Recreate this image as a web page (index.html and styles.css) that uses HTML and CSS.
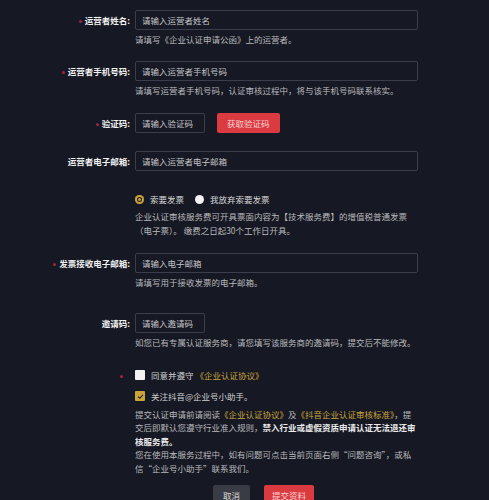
FILE: index.html
```html
<!DOCTYPE html>
<html lang="zh-CN">
<head>
    <meta charset="UTF-8">
    <meta name="viewport" content="width=device-width, initial-scale=1.0">
    <title>企业认证</title>
    <link rel="stylesheet" href="styles.css">
</head>
<body>
    <form class="apply-form">
        <div class="field field-name">
            <label class="label required">运营者姓名:</label>
            <div class="control">
                <input class="input" type="text" placeholder="请输入运营者姓名">
                <p class="hint">请填写《企业认证申请公函》上的运营者。</p>
            </div>
        </div>

        <div class="field field-phone">
            <label class="label required">运营者手机号码:</label>
            <div class="control">
                <input class="input" type="text" placeholder="请输入运营者手机号码">
                <p class="hint">请填写运营者手机号码，认证审核过程中，将与该手机号码联系核实。</p>
            </div>
        </div>

        <div class="field field-code">
            <label class="label required">验证码:</label>
            <div class="control code-row">
                <input class="input input-short" type="text" placeholder="请输入验证码">
                <button type="button" class="btn btn-red">获取验证码</button>
            </div>
        </div>

        <div class="field field-mail">
            <label class="label">运营者电子邮箱:</label>
            <div class="control">
                <input class="input" type="text" placeholder="请输入运营者电子邮箱">
            </div>
        </div>

        <div class="field field-invoice">
            <span class="label"></span>
            <div class="control">
                <div class="radios">
                    <span class="radio checked"></span><span>索要发票</span>
                    <span class="radio"></span><span>我放弃索要发票</span>
                </div>
                <p class="desc">企业认证审核服务费可开具票面内容为【技术服务费】的增值税普通发票（电子票）。 缴费之日起30个工作日开具。</p>
            </div>
        </div>

        <div class="field field-invoice-mail">
            <label class="label required">发票接收电子邮箱:</label>
            <div class="control">
                <input class="input" type="text" placeholder="请输入电子邮箱">
                <p class="hint">请填写用于接收发票的电子邮箱。</p>
            </div>
        </div>

        <div class="field field-invite">
            <label class="label">邀请码:</label>
            <div class="control">
                <input class="input input-short" type="text" placeholder="请输入邀请码">
                <p class="hint">如您已有专属认证服务商，请您填写该服务商的邀请码，提交后不能修改。</p>
            </div>
        </div>

        <div class="field field-agree">
            <span class="label dot"></span>
            <div class="control check-row">
                <span class="checkbox"></span>
                <span>同意并遵守 <a class="gold">《企业认证协议》</a></span>
            </div>
        </div>

        <div class="field field-follow">
            <span class="label"></span>
            <div class="control">
                <div class="check-row">
                    <span class="checkbox checked">
                        <svg viewBox="0 0 10 10" width="7" height="7"><path d="M1.5 5.2 L4 7.5 L8.5 2.5" fill="none" stroke="#1b1b1b" stroke-width="1.6"/></svg>
                    </span>
                    <span>关注抖音@企业号小助手。</span>
                </div>
                <p class="notice">提交认证申请前请阅读<a class="gold">《企业认证协议》</a>及<a class="gold">《抖音企业认证审核标准》</a>，提交后即默认您遵守行业准入规则，<strong>禁入行业或虚假资质申请认证无法退还审核服务费。</strong><br>您在使用本服务过程中，如有问题可点击当前页面右侧“问题咨询”，或私信“企业号小助手”联系我们。</p>
            </div>
        </div>

        <div class="actions">
            <button type="button" class="btn btn-gray">取消</button>
            <button type="button" class="btn btn-red btn-submit">提交资料</button>
        </div>
    </form>
</body>
</html>
```

FILE: styles.css
```css
* {
    margin: 0;
    padding: 0;
    box-sizing: border-box;
}

body {
    font-family: "Noto Sans CJK SC", "Noto Sans", sans-serif;
    font-size: 8.5px;
    background-color: #161823;
    color: #b8b8bc;
    overflow: hidden;
}

.apply-form {
    padding-top: 10px;
}

.field {
    display: grid;
    grid-template-columns: 130px 283px;
    column-gap: 5px;
    align-items: start;
}

.label {
    height: 20px;
    line-height: 20px;
    text-align: right;
    color: #f0f0f0;
    font-weight: 700;
}

.required::before,
.dot::before {
    content: "";
    display: inline-block;
    width: 3px;
    height: 3px;
    border-radius: 50%;
    background-color: #a3253d;
    margin-right: 3px;
    vertical-align: middle;
}

.dot {
    height: 12px;
    line-height: 12px;
    padding-right: 4px;
}

.input {
    display: block;
    width: 100%;
    height: 20px;
    padding: 0 6px;
    background-color: #161823;
    border: 1px solid #3b3d4a;
    border-radius: 2px;
    font-family: inherit;
    font-size: 8.5px;
    color: #ddd;
}

.input::placeholder {
    color: #c4c4c8;
}

.input-short {
    width: 70px;
}

.hint {
    margin-top: 3px;
    line-height: 12px;
}

.field-phone {
    margin-top: 16px;
}

.field-code {
    margin-top: 17px;
}

.code-row {
    display: flex;
    gap: 12px;
}

.btn {
    height: 20px;
    border: none;
    border-radius: 2px;
    font-family: inherit;
    font-size: 8.5px;
    cursor: pointer;
}

.btn-red {
    background-color: #dc3a41;
    color: #f7d2d2;
    padding: 0 10px;
}

.btn-gray {
    background-color: #3a3c45;
    color: #dadada;
    width: 37px;
}

.field-mail {
    margin-top: 18px;
}

.field-invoice {
    margin-top: 22px;
}

.field-invoice .label {
    height: 12px;
}

.radios {
    display: flex;
    align-items: center;
    height: 12px;
    color: #d8d8d8;
}

.radio {
    width: 9px;
    height: 9px;
    border-radius: 50%;
    background-color: #f2f2f2;
    margin-right: 6px;
}

.radio + span {
    margin-right: 11px;
}

.radio.checked {
    background-color: #c9a43a;
    box-shadow: inset 0 0 0 2px #c9a43a, inset 0 0 0 3px #161823;
}

.desc {
    margin-top: 4px;
    line-height: 14px;
}

.field-invoice-mail {
    margin-top: 16px;
}

.field-invite {
    margin-top: 25px;
}

.field-agree {
    margin-top: 21px;
}

.check-row {
    display: flex;
    align-items: center;
    gap: 6px;
    height: 12px;
    color: #d0d0d0;
}

.checkbox {
    width: 10px;
    height: 10px;
    background-color: #f2f2f2;
    border-radius: 1px;
    display: flex;
    align-items: center;
    justify-content: center;
}

.checkbox.checked {
    background-color: #c9a43a;
}

.gold {
    color: #c9a43a;
}

.field-follow {
    margin-top: 9px;
}

.field-follow .label {
    height: 12px;
}

.notice {
    margin-top: 6px;
    line-height: 13.4px;
}

.notice strong {
    color: #eaeaea;
    font-weight: 700;
}

.actions {
    display: flex;
    gap: 14px;
    padding-left: 213px;
    margin-top: 10px;
}

.btn-submit {
    width: 50px;
    padding: 0;
}
```
